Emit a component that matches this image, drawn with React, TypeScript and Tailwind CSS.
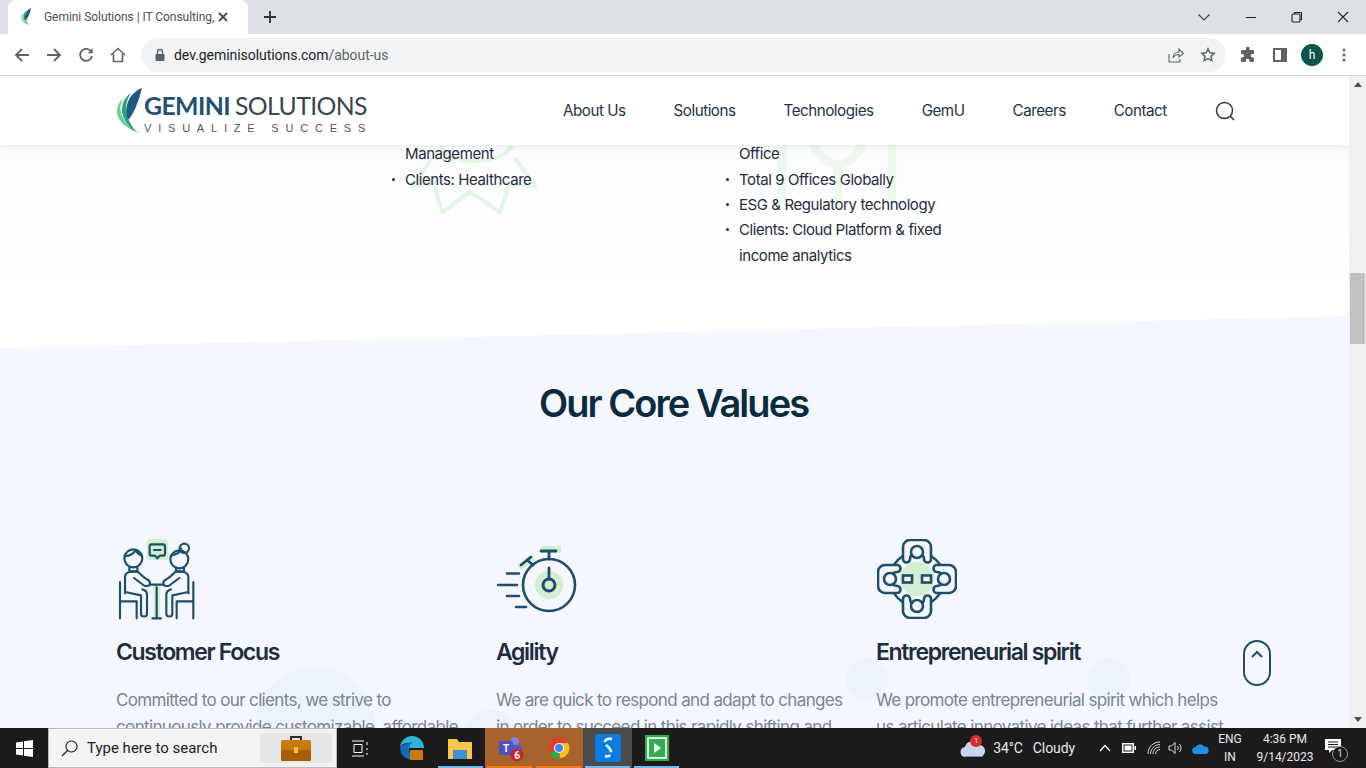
import React from "react";

const Ui = "[font-family:Roboto,sans-serif]";

function Feather({ size = 28, h = 46 }: { size?: number; h?: number }) {
  return (
    <svg width={size} height={h} viewBox="0 0 28 46" className="shrink-0">
      <path d="M7 11C3 14 1 18 1 23c0 10 11 19 23 22C14 40 6 32 4.500 23 4 19 5 15 7 11z" fill="#62d38e" />
      <path d="M15 5C9 9 6 15 6 22c0 8 6 16 14 22C14 35 9 28 10 19c.5-5 2-10 5-14z" fill="#2f9c7f" />
      <path d="M26 0C18 3 12 10 10.500 19c-.8 5 0 9 1.500 13C18 26 23 12 26 0z" fill="#1f5a80" />
    </svg>
  );
}

function Chevron() {
  return (
    <svg width="16" height="16" viewBox="0 0 16 16" fill="none" stroke="#3c4043" strokeWidth="1.100">
      <path d="M2.500 5.500 8 11l5.500-5.500" />
    </svg>
  );
}

function TabStrip() {
  return (
    <div className="flex h-[34px] items-end bg-[#dee1e6] pl-2">
      <div className="flex h-[34px] w-[240px] items-center rounded-t-lg bg-white pl-[11px] pr-[10px]">
        <Feather size={15} h={18} />
        <span className={`ml-[10px] w-[171px] overflow-hidden whitespace-nowrap text-[12px] tracking-[-0.05px] text-[#4a4d51] ${Ui}`}>
          Gemini Solutions | IT Consulting,
        </span>
        <svg width="10" height="10" viewBox="0 0 10 10" className="ml-[3px]" stroke="#45484c" strokeWidth="1.800">
          <path d="M1 1l8 8M9 1 1 9" />
        </svg>
      </div>
      <div className="flex h-[34px] w-[44px] items-center justify-center">
        <svg width="14" height="14" viewBox="0 0 14 14" stroke="#2f3236" strokeWidth="1.800">
          <path d="M7 1v12M1 7h12" />
        </svg>
      </div>
      <div className="flex-1" />
      <div className="flex h-[34px] items-center">
        <div className="ml-px flex w-[47px] justify-center"><Chevron /></div>
        <div className="ml-px flex w-[46px] justify-center">
          <svg width="12" height="12" viewBox="0 0 12 12" stroke="#222" strokeWidth="1"><path d="M1 6.500h10" /></svg>
        </div>
        <div className="flex w-[46px] justify-center">
          <svg width="12" height="12" viewBox="0 0 12 12" fill="none" stroke="#222" strokeWidth="1.100"><rect x="1" y="3" width="8" height="8" rx="1" /><path d="M3.500 3V1.500h7v7H9" /></svg>
        </div>
        <div className="flex w-[46px] justify-center">
          <svg width="12" height="12" viewBox="0 0 12 12" stroke="#222" strokeWidth="1.100"><path d="M1 1l10 10M11 1 1 11" /></svg>
        </div>
      </div>
    </div>
  );
}

function ToolIcon({ children }: { children: React.ReactNode }) {
  return <div className="flex h-8 w-8 items-center justify-center">{children}</div>;
}

function Toolbar() {
  return (
    <div className="flex h-[42px] items-center border-b border-[#d5d6d8] bg-white px-[6px]">
      <ToolIcon>
        <svg width="16" height="16" viewBox="0 0 16 16" fill="none" stroke="#5f6368" strokeWidth="1.800"><path d="M15 8H2M8 2 2 8l6 6" /></svg>
      </ToolIcon>
      <ToolIcon>
        <svg width="16" height="16" viewBox="0 0 16 16" fill="none" stroke="#5f6368" strokeWidth="1.800"><path d="M1 8h13M8 2l6 6-6 6" /></svg>
      </ToolIcon>
      <ToolIcon>
        <svg width="16" height="16" viewBox="0 0 16 16" fill="none" stroke="#5f6368" strokeWidth="1.800"><path d="M13.400 5A6 6 0 1 0 14 9" /><path d="M14.500 1.500V6H10" fill="#5f6368" strokeWidth="0.500" /></svg>
      </ToolIcon>
      <ToolIcon>
        <svg width="16" height="16" viewBox="0 0 16 16" fill="none" stroke="#5f6368" strokeWidth="1.600"><path d="M1 8l7-6.500L15 8M3.500 7v7.500h9V7" /></svg>
      </ToolIcon>
      <div className="ml-[7px] flex h-[34px] w-[1085px] items-center rounded-full bg-[#f1f3f4] pl-[13px] pr-[10px]">
        <svg width="12" height="14" viewBox="0 0 12 14" fill="#5f6368"><rect x="1.500" y="6" width="9" height="7" rx="1" /><path d="M3.500 6V4a2.500 2.500 0 0 1 5 0v2" fill="none" stroke="#5f6368" strokeWidth="1.400" /></svg>
        <span className={`ml-[8px] pt-px text-[14px] tracking-[-0.05px] text-[#202124] ${Ui}`}>
          dev.geminisolutions.com<span className="text-[#5f6368]">/about-us</span>
        </span>
        <div className="flex-1" />
        <svg width="16" height="16" viewBox="0 0 16 16" fill="none" stroke="#5f6368" strokeWidth="1.100"><path d="M1 7v8h11v-3" /><path d="M5 11c0-4 3-6 6-6V2l4.500 4.500L11 10V7.500C8 7.500 6 9 5 11z" /></svg>
        <svg width="16" height="16" viewBox="0 0 16 16" fill="none" stroke="#5f6368" strokeWidth="1.500" className="ml-4"><path d="M8 1.800l1.900 4 4.300.5-3.200 3 .9 4.300L8 11.500l-3.900 2.100.9-4.300-3.200-3 4.300-.5z" /></svg>
      </div>
      <div className="ml-[6px] flex items-center">
        <ToolIcon>
          <svg width="16" height="16" viewBox="0 0 16 16" fill="#5f6368"><path d="M6 1.500a1.800 1.800 0 0 1 3.600 0V3H13a1 1 0 0 1 1 1v3h-1.500a1.800 1.800 0 0 0 0 3.600H14V14a1 1 0 0 1-1 1H9.500v-1.400a1.800 1.800 0 0 0-3.600 0V15H2a1 1 0 0 1-1-1v-3.500h1.200a1.800 1.800 0 0 0 0-3.600H1V4a1 1 0 0 1 1-1h4z" /></svg>
        </ToolIcon>
        <ToolIcon>
          <svg width="14" height="14" viewBox="0 0 14 14" fill="none" stroke="#5f6368" strokeWidth="2"><rect x="1" y="1" width="12" height="12" /><rect x="9" y="1" width="4" height="12" fill="#5f6368" /></svg>
        </ToolIcon>
        <ToolIcon>
          <div className={`flex h-[22px] w-[22px] items-center justify-center rounded-full bg-[#0c5447] text-[12px] text-white ${Ui}`}>h</div>
        </ToolIcon>
        <ToolIcon>
          <svg width="4" height="14" viewBox="0 0 4 14" fill="#5f6368"><circle cx="2" cy="2" r="1.500" /><circle cx="2" cy="7" r="1.500" /><circle cx="2" cy="12" r="1.500" /></svg>
        </ToolIcon>
      </div>
    </div>
  );
}

function Logo() {
  return (
    <div className="flex items-center">
      <Feather />
      <div className="flex w-[225px] flex-col pt-[3px]">
        <div className="flex h-[30px] items-center whitespace-nowrap text-[24.800px] leading-[30px] tracking-[-0.6px] [font-family:Lato,sans-serif]">
          <span className="font-bold text-[#235173]">GEMINI</span>
          <span className="ml-[5px] text-[#39454f]">SOLUTIONS</span>
        </div>
        <div className="mt-[1px] h-[12px] whitespace-nowrap text-[11px] leading-[12px] tracking-[6.800px] text-[#4b5560] [font-family:'Liberation_Sans',sans-serif]">VISUALIZE SUCCESS</div>
      </div>
    </div>
  );
}

function Header() {
  const nav = [
    ["About Us", "ml-[194px]"],
    ["Solutions", "ml-[48px]"],
    ["Technologies", "ml-[48px]"],
    ["GemU", "ml-[48px]"],
    ["Careers", "ml-[48px]"],
    ["Contact", "ml-[48px]"],
  ];
  return (
    <div className="relative z-10 flex h-[69px] items-center bg-white pl-[116px] shadow-[0_2px_6px_rgba(0,0,0,0.07)]">
      <Logo />
      {nav.map(([t, c]) => (
        <span key={t} className={`${c} pt-[2px] text-[15.200px] tracking-[-0.48px] text-[#1d3344]`}>{t}</span>
      ))}
      <svg width="20" height="20" viewBox="0 0 20 20" fill="none" stroke="#27383f" strokeWidth="1.500" className="ml-[48px] mt-[1px]">
        <circle cx="9.500" cy="9.500" r="8" /><path d="M15.300 15.300 19 19" />
      </svg>
    </div>
  );
}

function Li({ children, plain }: { children: React.ReactNode; plain?: boolean }) {
  return (
    <li className="relative pl-[13px]">
      {!plain && <span className="absolute left-0 top-[11px] h-[3px] w-[3px] rounded-full bg-[#20303c]" />}
      {children}
    </li>
  );
}

function TopList() {
  return (
    <div className="relative -mt-[3.600px] h-[175.600px] bg-gradient-to-b from-[#fbfcfe] to-white pl-[392px] text-[15px] leading-[25.300px] tracking-[-0.42px] text-[#1f2d3a]">
      <svg width="140" height="80" viewBox="405 141 140 80" fill="none" stroke="#e3f5e3" strokeWidth="4" strokeLinejoin="round" className="absolute left-[405px] top-0">
        <path d="M432 158l-19 28 21-3 8 29 28-20 30 20 10-29 25 3-20-28" />
        <path d="M440 146c10 20 60 20 72 0" />
      </svg>
      <svg width="150" height="80" viewBox="760 141 150 80" fill="none" stroke="#eef9ee" strokeWidth="9" className="absolute left-[760px] top-0">
        <path d="M782 141v62M892 141v62M838 165v38M812 141c6 14 16 22 26 24 10-2 20-10 26-24" />
      </svg>
      <div className="relative flex">
        <ul className="w-[334px]">
          <Li plain>Management</Li>
          <Li>Clients: Healthcare</Li>
        </ul>
        <ul className="w-[232px]">
          <Li plain>Office</Li>
          <Li>Total 9 Offices Globally</Li>
          <Li>ESG &amp; Regulatory technology</Li>
          <Li>Clients: Cloud Platform &amp; fixed income analytics</Li>
        </ul>
      </div>
    </div>
  );
}

const stroke = "#1f4e6b";
const green = "#d3efd0";

function IconCustomer() {
  const half = (
    <>
      <path d="M88 112v12h24v-12" />
      <path d="M75 190v-48c0-8 5-14 13-16l24-2c8 8 20 20 32 26 8 4 8 18-2 18h-8l-32-24" />
      <path d="M75 186l48 10v56c0 10 18 10 18 0v-58c0-8-6-14-14-16" />
      <path d="M60 156v109M60 214h50v51" />
    </>
  );
  return (
    <svg width="80" height="82" viewBox="48 24 240 246" fill="none" stroke={stroke} strokeWidth="6.500" strokeLinecap="round" strokeLinejoin="round">
      <rect x="140" y="27" width="64" height="64" rx="9" fill={green} stroke="none" />
      <rect x="160" y="165" width="20" height="100" fill={green} stroke="none" />
      <path d="M155 43h34a6 6 0 0 1 6 6v22a6 6 0 0 1-6 6h-10l-7 8-7-8h-10a6 6 0 0 1-6-6V49a6 6 0 0 1 6-6z" />
      <path d="M162 60h20" />
      <circle cx="100" cy="85" r="27" />
      <path d="M75 78c15 0 26-6 32-18 4 8 10 14 19 17" />
      {half}
      <g transform="translate(340 0) scale(-1 1)">{half}</g>
      <circle cx="238" cy="88" r="27" />
      <circle cx="253" cy="55" r="14" />
      <path d="M214 76c16-2 26-8 30-20" />
      <path d="M170 172v93M157 265h26M150 164h40" />
    </svg>
  );
}

function IconAgility() {
  return (
    <svg width="80" height="68" viewBox="497 546 80 68" fill="none" stroke={stroke} strokeWidth="2.400" strokeLinecap="round" className="ml-px">
      <rect x="541" y="546" width="20" height="7" fill={green} stroke="none" />
      <path d="M517 565l14-10 4 5-14 10z" fill={green} stroke="none" />
      <circle cx="549" cy="585" r="14" fill={green} stroke="none" />
      <circle cx="549" cy="585" r="26" strokeWidth="2.600" />
      <circle cx="549" cy="585" r="6" strokeWidth="3" />
      <path d="M549 579v-11M549 559v-8M541 551h15M533 565l-6-5M521 565l10-8" strokeWidth="2.800" />
      <path d="M507 573.500h12M498 585h19M507 596h12M516 607h10" strokeWidth="2.600" />
    </svg>
  );
}

function IconEntre() {
  const part = "M-14 -20V-32a7 7 0 0 1 7-7H7a7 7 0 0 1 7 7v12a3.500 3.500 0 0 1-7 0 7 7 0 0 0-14 0 3.500 3.500 0 0 1-7 0z";
  return (
    <svg width="80" height="80" viewBox="-40 -40 80 80" fill="none" stroke={stroke} strokeWidth="2.600" className="ml-px mt-px">
      <circle r="17" fill={green} stroke="none" />
      <circle r="27" strokeWidth="2.400" />
      {[0, 90, 180, 270].map((a) => (
        <g key={a} transform={`rotate(${a})`}>
          <path d={part} fill="#f4f8fe" />
          <circle cy="-27" r="6" fill="#f4f8fe" />
        </g>
      ))}
      <rect x="-14" y="-3.500" width="9" height="7" fill="#f4f8fe" />
      <rect x="5" y="-3.500" width="9" height="7" fill="#f4f8fe" />
    </svg>
  );
}

function Card({ icon, title, lines }: { icon: React.ReactNode; title: string; lines: string[] }) {
  return (
    <div className="relative">
      <div className="flex h-[86px] items-start">{icon}</div>
      <h3 className="mt-[11px] text-[23px] font-semibold leading-[34px] tracking-[-1.340px] text-[#1e2d3b]">{title}</h3>
      <p className="mt-[18px] whitespace-nowrap text-[17px] leading-[27px] tracking-[-0.64px] text-[#7a8492]">
        {lines.map((l) => (
          <span key={l} className="block">{l}</span>
        ))}
      </p>
    </div>
  );
}

function CoreValues() {
  return (
    <div className="relative -mt-[1px] h-[443px] overflow-hidden bg-[#f4f8fe] [clip-path:polygon(0_32px,100%_0,100%_100%,0_100%)]">
      <div className="absolute left-[255px] top-[351px] h-[120px] w-[120px] rounded-full bg-[#edf3fa]" />
      <div className="absolute left-[461px] top-[394px] h-[60px] w-[60px] rounded-full bg-[#edf3fa]" />
      <div className="absolute left-[846px] top-[342px] h-[42px] w-[42px] rounded-full bg-[#edf3fa]" />
      <div className="absolute left-[1088px] top-[342px] h-[42px] w-[42px] rounded-full bg-[#edf3fa]" />
      <h2 className="relative pr-[2px] pt-[63px] text-center text-[38px] font-semibold leading-[48px] tracking-[-1.950px] text-[#0c2b3f]">Our Core Values</h2>
      <div className="relative mt-[111px] grid grid-cols-[380px_380px_380px] pl-[116px]">
        <Card icon={<IconCustomer />} title="Customer Focus" lines={["Committed to our clients, we strive to", "continuously provide customizable, affordable"]} />
        <Card icon={<div className="mt-[8px]"><IconAgility /></div>} title="Agility" lines={["We are quick to respond and adapt to changes", "in order to succeed in this rapidly shifting and"]} />
        <Card icon={<IconEntre />} title="Entrepreneurial spirit" lines={["We promote entrepreneurial spirit which helps", "us articulate innovative ideas that further assist"]} />
      </div>
    </div>
  );
}

function Scrollbar() {
  return (
    <div className="flex w-[17px] shrink-0 flex-col items-center bg-[#f1f1f1]">
      <div className="flex h-[17px] items-center justify-center">
        <div className="h-0 w-0 border-x-[4px] border-b-[5px] border-x-transparent border-b-[#505050]" />
      </div>
      <div className="mt-[180px] h-[71px] w-[15px] bg-[#c1c1c1]" />
      <div className="flex-1" />
      <div className="flex h-[17px] items-center justify-center">
        <div className="h-0 w-0 border-x-[4px] border-t-[5px] border-x-transparent border-t-[#505050]" />
      </div>
    </div>
  );
}

function Page() {
  return (
    <div className="relative flex h-[652px] overflow-hidden bg-white [font-family:Inter,sans-serif]">
      <div className="min-w-0 flex-1 overflow-hidden">
        <Header />
        <TopList />
        <CoreValues />
      </div>
      <Scrollbar />
      <div className="absolute left-[1243px] top-[564px] flex h-[46px] w-[28px] justify-center rounded-full border-2 border-[#1d4f63] pt-[8px]">
        <svg width="12" height="8" viewBox="0 0 12 8" fill="none" stroke="#1d4f63" strokeWidth="2"><path d="M1 7l5-5 5 5" /></svg>
      </div>
    </div>
  );
}

function TaskTile({ c = "", bar = "", children }: { c?: string; bar?: string; children: React.ReactNode }) {
  return (
    <div className={`relative flex h-10 w-[49px] items-center justify-center ${c}`}>
      {children}
      {bar && <div className={`absolute bottom-0 left-[2px] right-[2px] h-[2px] ${bar}`} />}
    </div>
  );
}

function Taskbar() {
  return (
    <div className={`flex h-10 items-center bg-[#1b1b1b] text-white ${Ui}`}>
      <div className="flex h-10 w-[48px] items-center justify-center">
        <svg width="17" height="17" viewBox="0 0 17 17" fill="#fff"><path d="M0 2.500 7 1.500V8H0zM8 1.300 17 0v8H8zM0 9h7v6.500l-7-1zM8 9h9v8l-9-1.300z" /></svg>
      </div>
      <div className="flex h-10 w-[289px] items-center border border-[#b8b8b8] bg-[#f3f3f3] pl-[12px] pr-[4px] text-[#1b1b1b]">
        <svg width="17" height="17" viewBox="0 0 17 17" fill="none" stroke="#222" strokeWidth="1.200"><circle cx="10.500" cy="6.500" r="5.500" /><path d="M6.500 10.500 1 16" /></svg>
        <span className="ml-[9px] text-[15px]">Type here to search</span>
        <div className="ml-auto flex h-[30px] w-[72px] items-center justify-center rounded-[4px] bg-[#e6e6e6]">
          <svg width="30" height="26" viewBox="0 0 30 26">
            <path d="M10 5V2h10v3" fill="none" stroke="#3a2a14" strokeWidth="2" />
            <rect x="0" y="5" width="30" height="21" rx="2" fill="#c9790f" />
            <rect x="0" y="15" width="30" height="11" rx="1" fill="#a85f0a" />
            <rect x="13" y="12" width="4" height="6" fill="#f4c430" />
          </svg>
        </div>
      </div>
      <div className="flex h-10 w-[50px] items-center justify-center pr-[3px]">
        <svg width="17" height="17" viewBox="0 0 17 17" fill="none" stroke="#fff" strokeWidth="1"><path d="M0 1h12M0 16h12M2 4.500h8v8H2zM15 2v3M15 8v2M15 13v2" /></svg>
      </div>
      <TaskTile>
        <svg width="26" height="26" viewBox="0 0 26 26">
          <path d="M1 12C2 5 7 1 13 1c7 0 12 5 12 12H9c0-3 3-5 5-5-5-1-11 0-13 4z" fill="#2bb3d8" />
          <path d="M1 12c0 8 6 13 13 13 4 0 7-1 9-3-6 1-13-1-13-8 0-2 1-4 2-6-5 0-9 2-11 4z" fill="#0f6cbd" />
          <rect x="11" y="15" width="13" height="10" rx="1" fill="#c9790f" />
        </svg>
      </TaskTile>
      <TaskTile bar="bg-[#76b9ed]">
        <svg width="24" height="22" viewBox="0 0 24 22" className="mr-[2px]"><path d="M0 2h9l2 3h13v17H0z" fill="#f5c748" /><rect x="5" y="13" width="14" height="9" fill="#3f8fd4" /></svg>
      </TaskTile>
      <TaskTile c="bg-[#a8622c]" bar="bg-[#f57c16]">
        <svg width="28" height="28" viewBox="0 0 28 28">
          <circle cx="19" cy="7" r="4" fill="#7b83eb" />
          <rect x="13" y="11" width="13" height="12" rx="3" fill="#5059c9" />
          <rect x="3" y="7" width="14" height="14" rx="2" fill="#4b53bc" />
          <text x="10" y="18" fontSize="10" fill="#fff" textAnchor="middle" fontWeight="700">T</text>
          <circle cx="21" cy="21" r="6.500" fill="#c4262e" />
          <text x="21" y="25" fontSize="10" fill="#fff" textAnchor="middle" fontWeight="700">6</text>
        </svg>
      </TaskTile>
      <TaskTile c="bg-[#a8622c]" bar="bg-[#f57c16]">
        <svg width="22" height="22" viewBox="0 0 22 22">
          <circle cx="11" cy="11" r="10.500" fill="#e33b2e" />
          <path d="M11 11 2 16a10.500 10.500 0 0 0 10 5.500z" fill="#2da94f" />
          <path d="M11 11l1 10.500A10.500 10.500 0 0 0 21.500 11 10 10 0 0 0 20 6H11z" fill="#fbc116" />
          <circle cx="11" cy="11" r="5" fill="#fff" /><circle cx="11" cy="11" r="4" fill="#4285f4" />
        </svg>
      </TaskTile>
      <TaskTile c="bg-[#4a4a4a]" bar="bg-[#76b9ed]">
        <svg width="26" height="28" viewBox="0 0 26 28">
          <rect width="26" height="28" rx="2" fill="#0a7ce0" />
          <path d="M17 5c-5-1-8 1-7 4s6 5 6 9-3 5-6 4" fill="none" stroke="#fff" strokeWidth="2.500" strokeDasharray="9 3" />
        </svg>
      </TaskTile>
      <TaskTile bar="bg-[#76b9ed]">
        <svg width="24" height="26" viewBox="0 0 24 26"><rect x="1" y="1" width="22" height="24" fill="#fff" stroke="#2fae4e" strokeWidth="2.500" /><rect x="4" y="4" width="16" height="18" fill="#2fae4e" /><path d="M9 8l7 5-7 5z" fill="#fff" /></svg>
      </TaskTile>
      <div className="flex-1" />
      <div className="relative">
        <svg width="26" height="20" viewBox="0 0 26 20">
          <path d="M6 19a5 5 0 0 1-1-10 7 7 0 0 1 13-2 6 6 0 0 1 2 12z" fill="#c8d6ea" />
          <path d="M6 19a5 5 0 0 1-2-1h20a6 6 0 0 1-4 1z" fill="#5f8fcb" />
        </svg>
        <div className="absolute -top-[3px] left-[10px] flex h-[12px] w-[12px] items-center justify-center rounded-full bg-[#d92b2b] text-[8px] leading-none">1</div>
      </div>
      <span className="ml-[7px] whitespace-nowrap text-[14px] tracking-[-0.1px] text-[#e8e8e8]">34°C</span>
      <span className="ml-[10px] whitespace-nowrap text-[14px] tracking-[-0.1px] text-[#e8e8e8]">Cloudy</span>
      <svg width="12" height="8" viewBox="0 0 12 8" fill="none" stroke="#fff" strokeWidth="1.200" className="ml-[24px]"><path d="M1 7l5-5.500L11 7" /></svg>
      <svg width="14" height="10" viewBox="0 0 14 10" className="ml-[11px]" fill="#fff"><path d="M0 0h12v10H0zM1.500 1.500v7h9v-7z" fillRule="evenodd" /><rect x="2.500" y="2.500" width="7" height="5" /><rect x="12.500" y="3" width="1.500" height="4" /></svg>
      <svg width="14" height="14" viewBox="0 0 14 14" fill="none" stroke="#ddd" strokeWidth="1" className="ml-[11px]"><path d="M1 13C1 6 6 1 13 1M3.500 13c0-5 4.500-9.500 9.500-9.500M6 13c0-4 3-7 7-7M8.500 13c0-2.500 2-4.500 4.500-4.500" /></svg>
      <svg width="16" height="14" viewBox="0 0 16 14" fill="none" stroke="#ddd" strokeWidth="1" className="ml-[7px]"><path d="M1 5v4h2.500L7 12.500v-11L3.500 5zM9.500 5a3 3 0 0 1 0 4M11.500 3a6 6 0 0 1 0 8" /></svg>
      <svg width="17" height="11" viewBox="0 0 17 11" fill="#1f8fe0" className="ml-[8px]"><path d="M4 11a3.500 3.500 0 0 1-.5-7A5 5 0 0 1 12 3.500 3.800 3.800 0 0 1 13.500 11z" /></svg>
      <div className="ml-[6px] flex w-[30px] flex-col items-center text-[12px] leading-[18px] text-[#e8e8e8]">
        <span>ENG</span><span>IN</span>
      </div>
      <div className="ml-[7px] flex w-[66px] flex-col items-center text-[12px] leading-[18px] text-[#e8e8e8]">
        <span>4:36 PM</span><span>9/14/2023</span>
      </div>
      <div className="relative mr-[22px] h-10 w-[26px]">
        <svg width="16" height="16" viewBox="0 0 16 16" className="absolute left-[7px] top-[11px]" fill="#fff"><path d="M0 0h16v11H7l-3 3v-3H0z" /><path d="M3 3h10M3 5.500h10M3 8h10" stroke="#1b1b1b" strokeWidth="1" /></svg>
        <div className="absolute left-[14px] top-[18px] flex h-[16px] w-[16px] items-center justify-center rounded-full border border-[#999] bg-[#1b1b1b] text-[10px] leading-none text-[#ddd]">1</div>
      </div>
    </div>
  );
}

export default function App() {
  return (
    <div className="flex h-[768px] w-[1366px] flex-col overflow-hidden">
      <TabStrip />
      <Toolbar />
      <Page />
      <Taskbar />
    </div>
  );
}
